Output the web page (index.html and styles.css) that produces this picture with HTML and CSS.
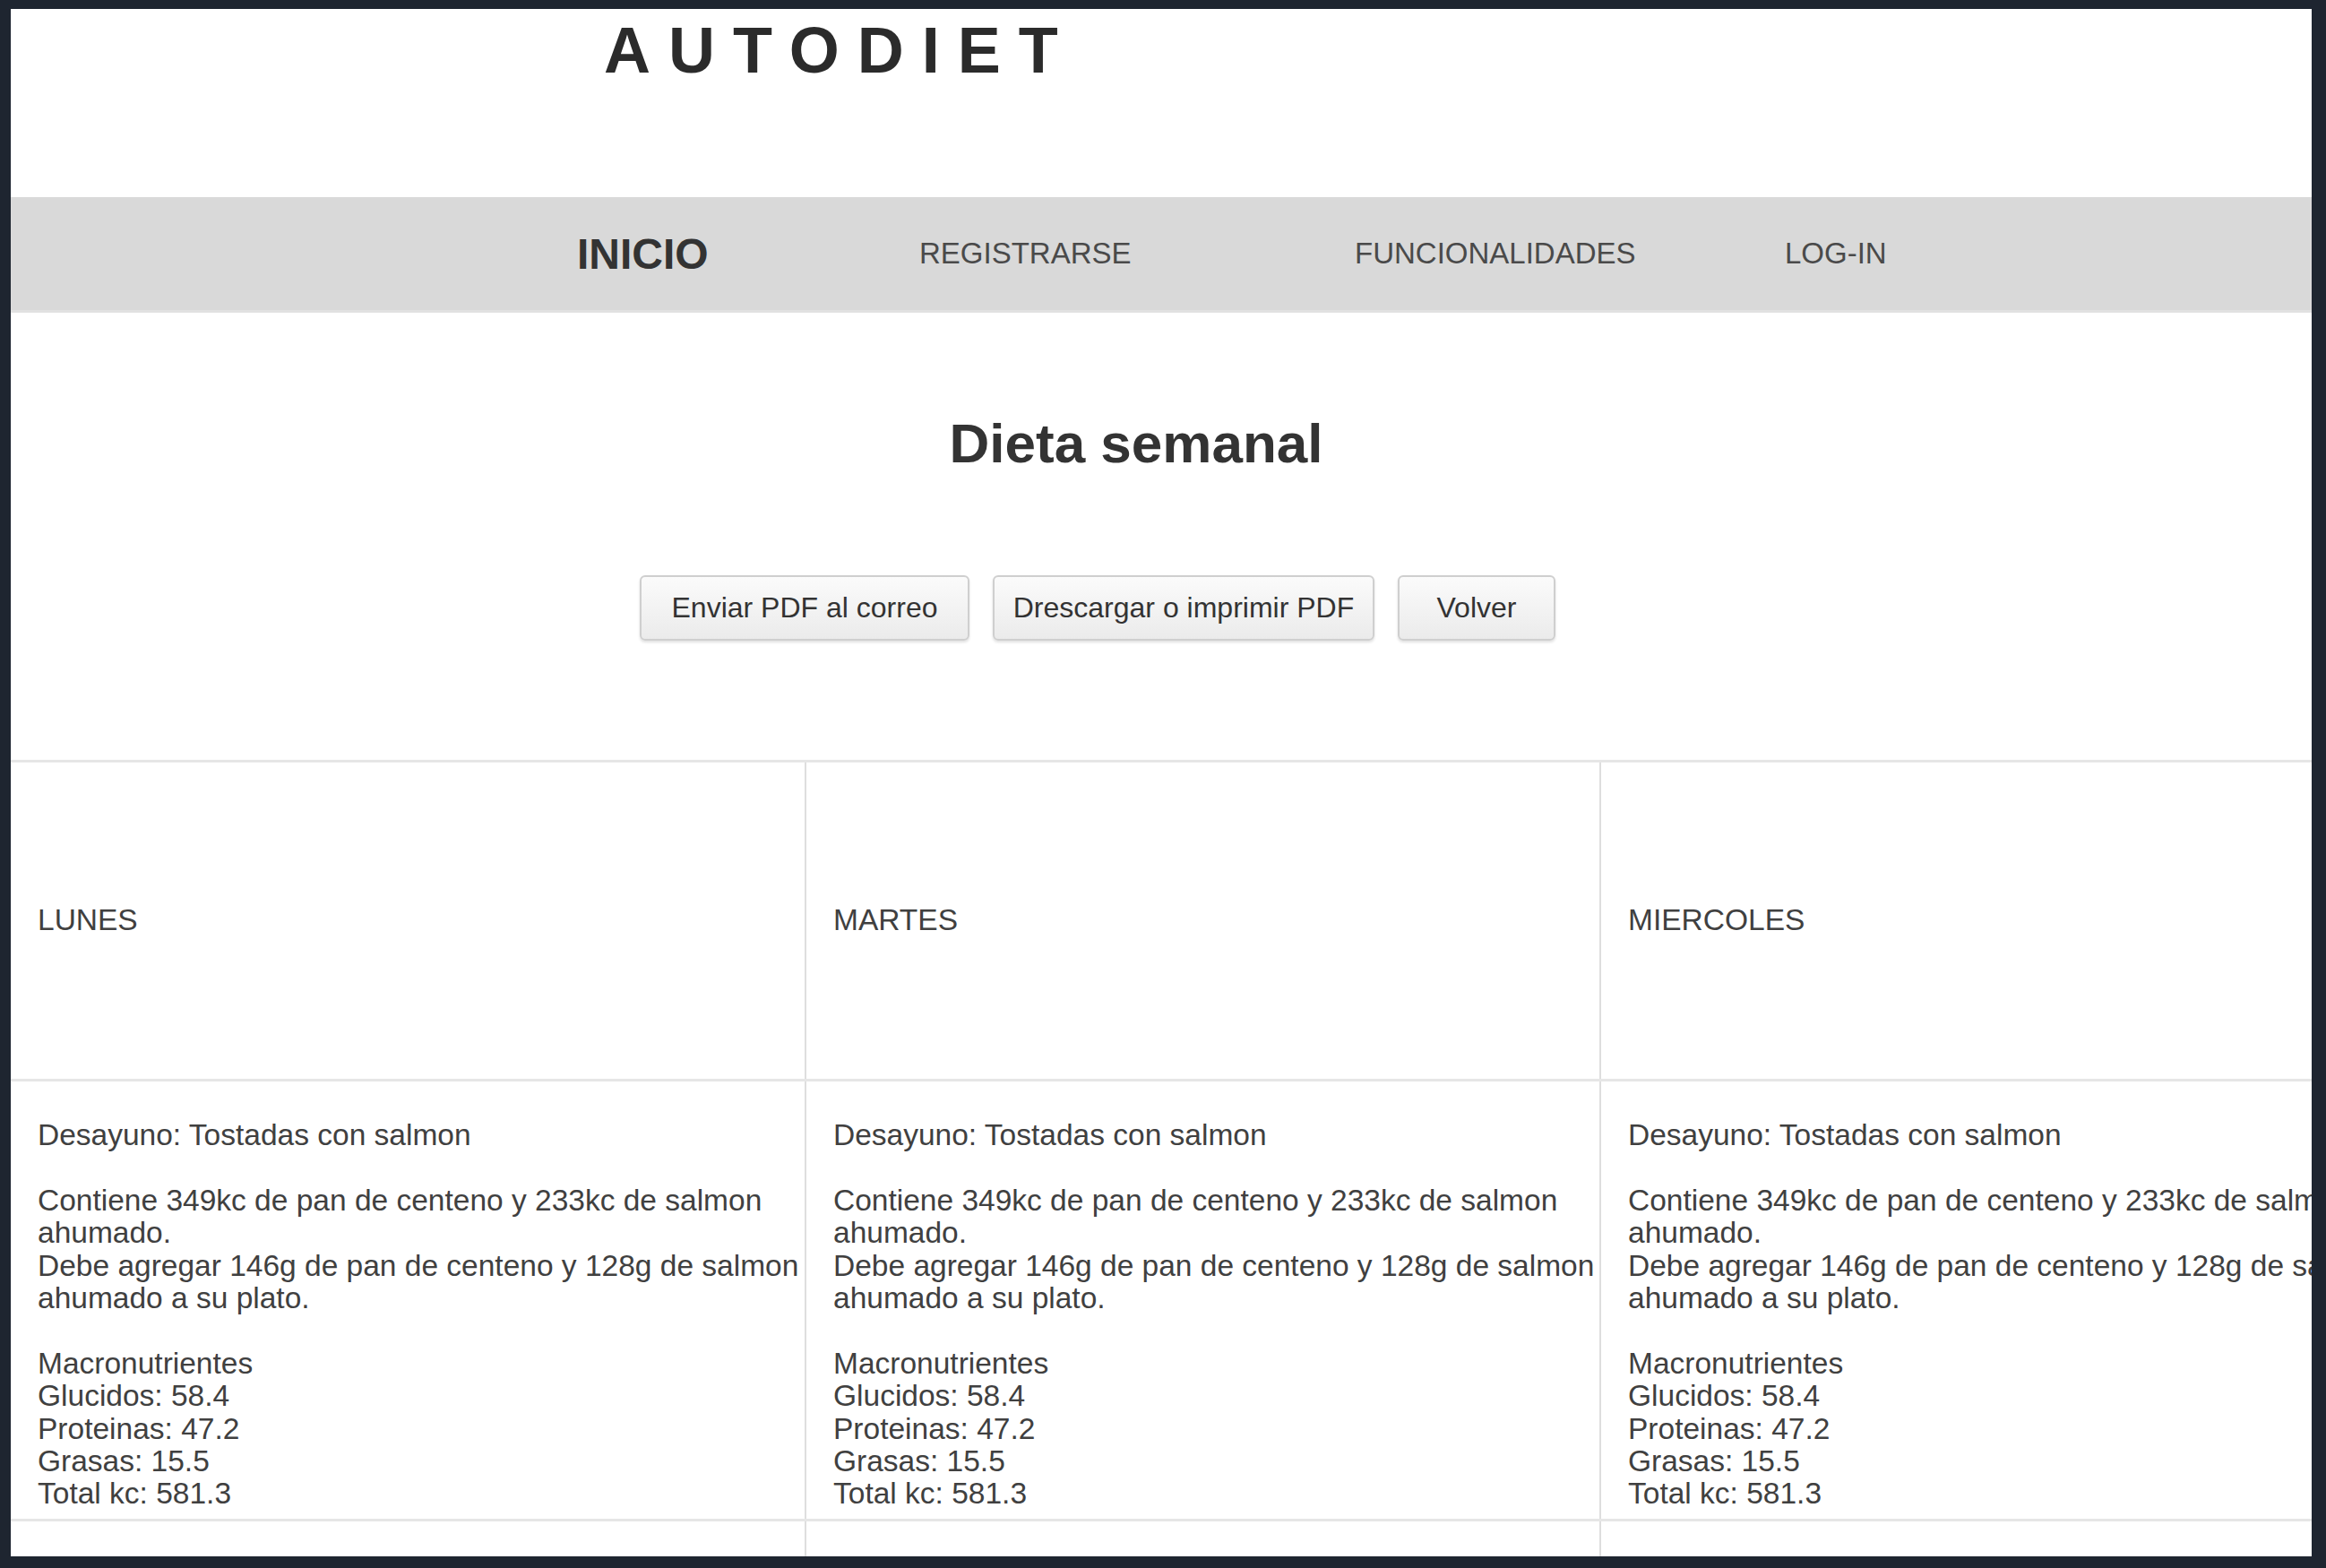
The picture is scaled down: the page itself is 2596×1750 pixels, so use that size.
FILE: index.html
```html
<!DOCTYPE html>
<html lang="es">
<head>
  <meta charset="UTF-8" />
  <title>Autodiet – Dieta semanal</title>
  <meta name="viewport" content="width=device-width, initial-scale=1" />
  <link rel="stylesheet" href="styles.css">
</head>
<body>
  <div class="page">
    <header class="site-header">
      <span class="logo">AUTODIET</span>
    </header>

    <nav class="main-nav">
      <a href="#" class="nav-link active">INICIO</a>
      <a href="#" class="nav-link">REGISTRARSE</a>
      <a href="#" class="nav-link">FUNCIONALIDADES</a>
      <a href="#" class="nav-link">LOG-IN</a>
    </nav>

    <h1 class="page-title">Dieta semanal</h1>

    <div class="actions">
      <button class="btn btn-mail">Enviar PDF al correo</button>
      <button class="btn btn-pdf">Drescargar o imprimir PDF</button>
      <button class="btn btn-back">Volver</button>
    </div>

    <table class="diet-table">
      <tr class="day-row">
        <td>LUNES</td>
        <td>MARTES</td>
        <td>MIERCOLES</td>
      </tr>
      <tr class="meal-row">
        <td>
          Desayuno: Tostadas con salmon<br><br>
          Contiene 349kc de pan de centeno y 233kc de salmon ahumado.<br>
          Debe agregar 146g de pan de centeno y 128g de salmon ahumado a su plato.<br><br>
          Macronutrientes<br>
          Glucidos: 58.4<br>
          Proteinas: 47.2<br>
          Grasas: 15.5<br>
          Total kc: 581.3
        </td>
        <td>
          Desayuno: Tostadas con salmon<br><br>
          Contiene 349kc de pan de centeno y 233kc de salmon ahumado.<br>
          Debe agregar 146g de pan de centeno y 128g de salmon ahumado a su plato.<br><br>
          Macronutrientes<br>
          Glucidos: 58.4<br>
          Proteinas: 47.2<br>
          Grasas: 15.5<br>
          Total kc: 581.3
        </td>
        <td>
          Desayuno: Tostadas con salmon<br><br>
          Contiene 349kc de pan de centeno y 233kc de salmon ahumado.<br>
          Debe agregar 146g de pan de centeno y 128g de salmon ahumado a su plato.<br><br>
          Macronutrientes<br>
          Glucidos: 58.4<br>
          Proteinas: 47.2<br>
          Grasas: 15.5<br>
          Total kc: 581.3
        </td>
      </tr>
      <tr class="meal-row">
        <td></td>
        <td></td>
        <td></td>
      </tr>
    </table>
  </div>
</body>
</html>
```

FILE: styles.css
```css
/* ——— page frame ——— */
body { margin: 0; background: #1e2530; font-family: "Liberation Sans", Arial, sans-serif; color: #333; }
.page {
  margin: 10px 16px 0 12px;
  height: calc(100vh - 23px);
  background: #fff;
  overflow: hidden;
}

/* ——— header + nav ——— */
.site-header { height: 210px; padding-left: 662px; box-sizing: border-box; padding-top: 10px; }
.logo { font-size: 72px; line-height: 72px; font-weight: bold; letter-spacing: 20px; color: #2b2b2b; }

.main-nav {
  display: grid;
  grid-template-columns: 382px 486px 480px auto;
  align-items: center;
  height: 129px;
  padding-left: 632px;
  background: #d9d9d9;
  border-bottom: 3px solid #e1e1e1;
  box-sizing: border-box;
}
.nav-link { font-size: 33px; color: #4a4a4a; text-decoration: none; }
.nav-link.active { font-size: 48px; font-weight: bold; color: #333; }

/* ——— title + buttons ——— */
.page-title {
  margin: 110px 0 0;
  padding-right: 56px;
  text-align: center;
  font-size: 62px;
  line-height: 72px;
  color: #333;
}
.actions { display: flex; justify-content: center; gap: 26px; margin-top: 111px; padding-right: 142px; }
.btn {
  height: 73px;
  padding: 0;
  font-family: inherit;
  font-size: 32px;
  color: #333;
  background: linear-gradient(#fbfbfb, #ebebeb);
  border: 2px solid #cfcfcf;
  border-radius: 6px;
  box-shadow: 0 2px 3px rgba(0,0,0,0.12);
  cursor: pointer;
}
.btn-mail { width: 368px; }
.btn-pdf { width: 426px; }
.btn-back { width: 176px; }

/* ——— weekly table ——— */
.diet-table {
  margin-top: 133px;
  border-collapse: collapse;
  table-layout: fixed;
  width: 2661px;
  font-size: 33.5px;
  line-height: 36.4px;
  color: #404040;
}
.diet-table td {
  box-sizing: border-box;
  width: 887px;
  padding: 0 2px 0 30px;
  border-top: 3px solid #e6e6e6;
  border-left: 2px solid #dedede;
  vertical-align: top;
}
.diet-table td:first-child { border-left: none; }
.day-row td { height: 356px; vertical-align: middle; }
.meal-row td { padding-top: 42px; padding-bottom: 9px; }
```
